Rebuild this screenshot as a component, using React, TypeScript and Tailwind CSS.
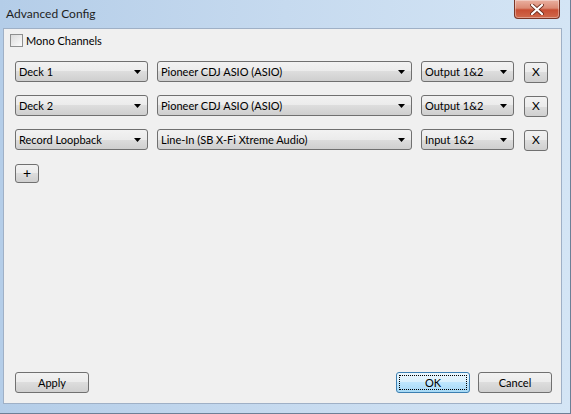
import React from "react";

const font = { fontFamily: 'Lato, "Noto Sans", sans-serif' };

function Arrow() {
  return (
    <svg width="7" height="4" viewBox="0 0 7 4" className="shrink-0">
      <path d="M0 0 H7 L3.5 4 Z" fill="#000" />
    </svg>
  );
}

function Combo({ w, label }: { w: string; label: string }) {
  return (
    <div
      className={`${w} h-[21px] shrink-0 flex items-center justify-between pl-[3px] pr-[6px] rounded-[3px] border border-[#707070] bg-[linear-gradient(to_bottom,#f2f2f2_0%,#ebebeb_50%,#dddddd_50%,#cfcfcf_100%)] text-[11px] text-black`}
    >
      <span className="leading-none pb-[1px]">{label}</span>
      <Arrow />
    </div>
  );
}

function Btn({
  w,
  h,
  label,
  focused,
  extra,
  size,
}: {
  w: string;
  h: string;
  label: string;
  focused?: boolean;
  extra?: string;
  size?: string;
}) {
  return (
    <div
      className={`${w} ${h} ${extra ?? ""} ${size ?? "text-[11px]"} shrink-0 flex items-center justify-center rounded-[3px] border text-black ${
        focused
          ? "border-[#3c7fb1] bg-[linear-gradient(to_bottom,#eaf6fd_0%,#d9f0fc_50%,#bee6fd_50%,#a7d9f5_100%)] p-[2px]"
          : "border-[#707070] bg-[linear-gradient(to_bottom,#f2f2f2_0%,#ebebeb_50%,#dddddd_50%,#cfcfcf_100%)]"
      }`}
    >
      {focused ? (
        <div className="w-full h-full flex items-center justify-center border border-dotted border-[#000]">
          <span className="leading-none pb-[1px]">{label}</span>
        </div>
      ) : (
        <span className="leading-none pb-[1px]">{label}</span>
      )}
    </div>
  );
}

function Row({ a, b, c }: { a: string; b: string; c: string }) {
  return (
    <div className="flex items-start">
      <Combo w="w-[133px]" label={a} />
      <div className="w-[9px] shrink-0" />
      <Combo w="w-[255px]" label={b} />
      <div className="w-[9px] shrink-0" />
      <Combo w="w-[93px]" label={c} />
      <div className="w-[10px] shrink-0" />
      <Btn w="w-[24px]" h="h-[21px]" label="X" extra="mt-[1px]" size="text-[12px]" />
    </div>
  );
}

export default function App() {
  return (
    <div
      style={font}
      className="w-[571px] h-[414px] flex flex-col bg-[linear-gradient(to_right,#b4cde8,#c6daef_50%,#d4e5f5)] overflow-hidden border-b border-r border-[#6d7f96]"
    >
      {/* Title bar */}
      <div className="h-[28px] shrink-0 flex items-start relative">
        <div className="pl-[6px] pt-[5px] text-[12px] text-[#1e1e1e]">Advanced Config</div>
        <div className="ml-auto mr-[10px] w-[46px] h-[19px] rounded-b-[4px] border border-t-0 border-[#7a3526] bg-[linear-gradient(to_bottom,#eab0a0_0%,#db8a74_45%,#c84e33_55%,#d0694c_100%)] flex items-center justify-center shadow-[inset_0_0_0_1px_rgba(255,255,255,0.35)]">
          <svg width="14" height="11" viewBox="0 0 14 11">
            <path d="M2 1 L12 10 M12 1 L2 10" stroke="#6a2c1e" strokeWidth="3.8" strokeLinecap="round" />
            <path d="M2 1 L12 10 M12 1 L2 10" stroke="#ffffff" strokeWidth="2.2" strokeLinecap="round" />
          </svg>
        </div>
      </div>

      {/* Client area */}
      <div className="ml-[3px] mr-[8px] mb-[9px] flex-1 flex flex-col bg-[#f0f0f0] border border-[#9fb0c6] text-black">
        <div className="flex items-center pl-[6px] pt-[4px] h-[19px]">
          <div className="w-[13px] h-[13px] border border-[#8e8f8f] bg-[linear-gradient(135deg,#dcdcdc,#fbfbfb)] shrink-0" />
          <span className="ml-[3px] text-[11px] leading-none">Mono Channels</span>
        </div>

        <div className="flex flex-col gap-[12px] pl-[11px] mt-[13px]">
          <Row a="Deck 1" b="Pioneer CDJ ASIO (ASIO)" c="Output 1&2" />
          <Row a="Deck 2" b="Pioneer CDJ ASIO (ASIO)" c="Output 1&2" />
          <Row a="Record Loopback" b="Line-In (SB X-Fi Xtreme Audio)" c="Input 1&2" />
          <div className="mt-[1px]">
            <Btn w="w-[24px]" h="h-[19px]" label="+" size="text-[14px]" />
          </div>
        </div>

        <div className="mt-auto flex items-center pl-[11px] pr-[9px] pb-[10px]">
          <Btn w="w-[74px]" h="h-[21px]" label="Apply" />
          <div className="flex-1" />
          <Btn w="w-[74px]" h="h-[21px]" label="OK" focused />
          <div className="w-[8px]" />
          <Btn w="w-[74px]" h="h-[21px]" label="Cancel" />
        </div>
      </div>
    </div>
  );
}
